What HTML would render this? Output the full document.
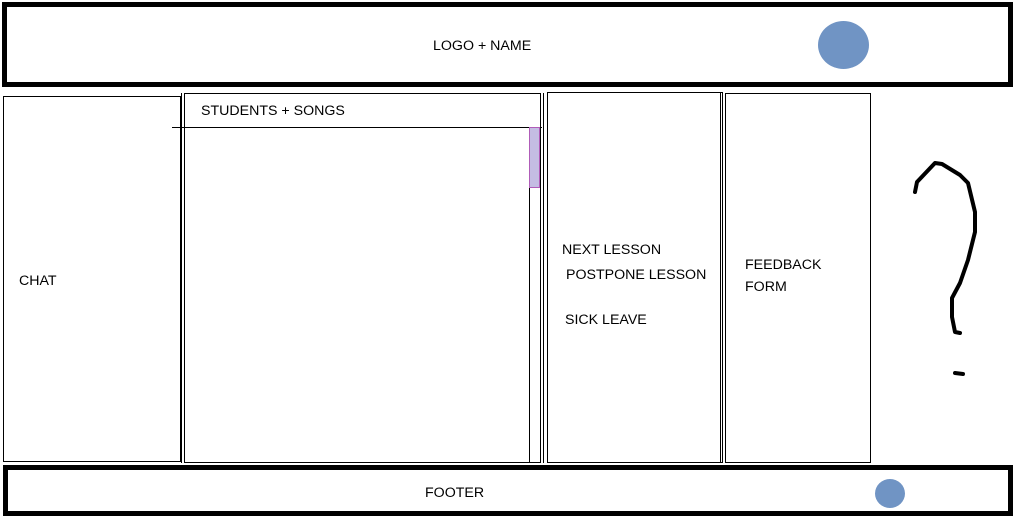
<!DOCTYPE html>
<html><head><style>
body{margin:0;width:1015px;height:519px;background:#fff;position:relative;overflow:hidden;font-family:"Liberation Sans",sans-serif;font-size:14.2px;color:#000}
.a{position:absolute;box-sizing:border-box}
.t{position:absolute;white-space:nowrap}
</style></head><body>
<div class="a" style="left:2px;top:2px;width:1011px;height:85px;border:5px solid #000"></div>
<div class="t" style="left:433px;top:38px">LOGO + NAME</div>
<div class="a" style="left:818px;top:21px;width:51px;height:48px;border-radius:50%;background:#7094c4"></div>

<div class="a" style="left:3px;top:96px;width:179px;height:366px;border:1px solid #000;border-right-width:1px"></div>
<div class="a" style="left:180px;top:96px;width:2px;height:366px;border-left:1px solid #000"></div>
<div class="t" style="left:19px;top:273px">CHAT</div>

<div class="a" style="left:181px;top:93px;width:1px;height:370px;background:#000"></div>
<div class="a" style="left:184px;top:93px;width:357px;height:370px;border:1px solid #000"></div>
<div class="a" style="left:172px;top:127px;width:370px;height:1px;background:#000"></div>
<div class="t" style="left:201px;top:103px">STUDENTS + SONGS</div>
<div class="a" style="left:529px;top:127px;width:1px;height:335px;background:#000"></div>
<div class="a" style="left:529px;top:127px;width:11px;height:61px;background:#c4bde3;border:1px solid #b05cb8"></div>
<div class="a" style="left:543px;top:93px;width:1px;height:370px;background:#000"></div>

<div class="a" style="left:547px;top:92px;width:176px;height:371px;border:1px solid #000"></div>
<div class="a" style="left:720px;top:92px;width:1px;height:371px;background:#000"></div>
<div class="t" style="left:562px;top:242px">NEXT LESSON</div>
<div class="t" style="left:566px;top:267px">POSTPONE LESSON</div>
<div class="t" style="left:565px;top:312px">SICK LEAVE</div>

<div class="a" style="left:725px;top:93px;width:146px;height:370px;border:1px solid #000"></div>
<div class="t" style="left:745px;top:254px;line-height:22px">FEEDBACK<br>FORM</div>

<svg class="a" style="left:0;top:0" width="1015" height="519">
<path d="M915 192 L917 182 L935 163 L942 164 L960 175 L968 183 L975 212 L975 232 L968 260 L960 283 L952 298 L952 317 L955 332 L960 333" fill="none" stroke="#000" stroke-width="4" stroke-linejoin="round" stroke-linecap="round"/>
<path d="M955 373 L963 374" stroke="#000" stroke-width="4" stroke-linecap="round"/>
</svg>

<div class="a" style="left:3px;top:465px;width:1010px;height:51px;border:5px solid #000"></div>
<div class="t" style="left:425px;top:485px">FOOTER</div>
<div class="a" style="left:875px;top:479px;width:30px;height:29px;border-radius:50%;background:#7094c4"></div>
</body></html>
